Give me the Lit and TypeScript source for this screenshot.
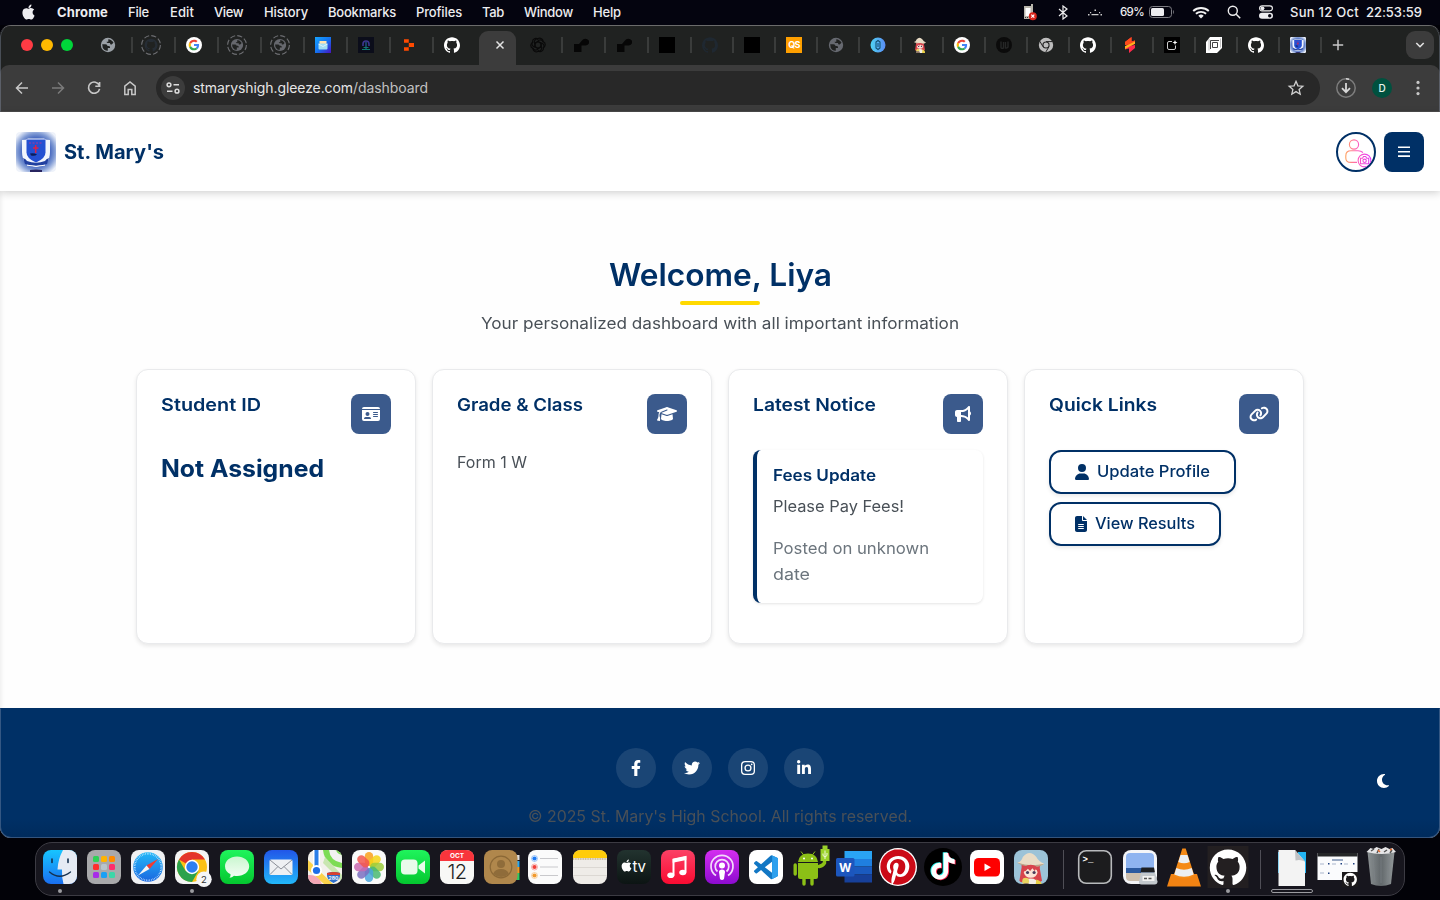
import { LitElement, html, css, svg, type TemplateResult } from "lit";
import { customElement, property } from "lit/decorators.js";

const GITHUB = "M12 .297c-6.63 0-12 5.373-12 12 0 5.303 3.438 9.8 8.205 11.385.6.113.82-.258.82-.577 0-.285-.01-1.04-.015-2.04-3.338.724-4.042-1.61-4.042-1.61C4.422 18.07 3.633 17.7 3.633 17.7c-1.087-.744.084-.729.084-.729 1.205.084 1.838 1.236 1.838 1.236 1.07 1.835 2.809 1.305 3.495.998.108-.776.417-1.305.76-1.605-2.665-.3-5.466-1.332-5.466-5.93 0-1.31.465-2.38 1.235-3.22-.135-.303-.54-1.523.105-3.176 0 0 1.005-.322 3.3 1.23.96-.267 1.98-.399 3-.405 1.02.006 2.04.138 3 .405 2.28-1.552 3.285-1.23 3.285-1.23.645 1.653.24 2.873.12 3.176.765.84 1.23 1.91 1.23 3.22 0 4.61-2.805 5.625-5.475 5.92.42.36.81 1.096.81 2.22 0 1.606-.015 2.896-.015 3.286 0 .315.21.69.825.57C20.565 22.092 24 17.592 24 12.297c0-6.627-5.373-12-12-12";
const APPLE = "M12.152 6.896c-.948 0-2.415-1.078-3.96-1.04-2.04.027-3.91 1.183-4.961 3.014-2.117 3.675-.546 9.103 1.519 12.09 1.013 1.454 2.208 3.09 3.792 3.039 1.52-.065 2.09-.987 3.935-.987 1.831 0 2.35.987 3.96.948 1.637-.026 2.676-1.48 3.676-2.948 1.156-1.688 1.636-3.325 1.662-3.415-.039-.013-3.182-1.221-3.22-4.857-.026-3.04 2.48-4.494 2.597-4.559-1.429-2.09-3.623-2.324-4.39-2.376-2-.156-3.675 1.09-4.61 1.09zM15.53 3.83c.843-1.012 1.4-2.427 1.245-3.83-1.207.052-2.662.805-3.532 1.818-.78.896-1.454 2.338-1.273 3.714 1.338.104 2.715-.688 3.559-1.701";
const FACEBOOK = "M279.14 288l14.22-92.66h-88.91v-60.13c0-25.35 12.42-50.06 52.24-50.06h40.42V6.26S260.43 0 225.36 0c-73.22 0-121.08 44.38-121.08 124.72v70.62H22.89V288h81.39v224h100.17V288z";
const TWITTER = "M459.37 151.716c.325 4.548.325 9.097.325 13.645 0 138.72-105.583 298.558-298.558 298.558-59.452 0-114.68-17.219-161.137-47.106 8.447.974 16.568 1.299 25.34 1.299 49.055 0 94.213-16.568 130.274-44.832-46.132-.975-84.792-31.188-98.112-72.772 6.498.974 12.995 1.624 19.818 1.624 9.421 0 18.843-1.3 27.614-3.573-48.081-9.747-84.143-51.98-84.143-102.985v-1.299c13.969 7.797 30.214 12.67 47.431 13.319-28.264-18.843-46.781-51.005-46.781-87.391 0-19.492 5.197-37.36 14.294-52.954 51.655 63.675 129.3 105.258 216.365 109.807-1.624-7.797-2.599-15.918-2.599-24.04 0-57.828 46.782-104.934 104.934-104.934 30.213 0 57.502 12.67 76.67 33.137 23.715-4.548 46.456-13.32 66.599-25.34-7.798 24.366-24.366 44.833-46.132 57.827 21.117-2.273 41.584-8.122 60.426-16.243-14.292 20.791-32.161 39.308-52.628 54.253z";
const LINKEDIN = "M100.28 448H7.4V148.9h92.88zM53.79 108.1C24.09 108.1 0 83.5 0 53.8a53.79 53.79 0 0 1 107.58 0c0 29.7-24.1 54.3-53.79 54.3zM447.9 448h-92.68V302.4c0-34.7-.7-79.2-48.29-79.2-48.29 0-55.69 37.7-55.69 76.7V448h-92.78V148.9h89.08v40.8h1.3c12.4-23.5 42.69-48.3 87.88-48.3 94 0 111.28 61.9 111.28 142.3V448z";
const USER = "M224 256A128 128 0 1 0 224 0a128 128 0 1 0 0 256zm-45.7 48C79.8 304 0 383.8 0 482.3C0 498.7 13.3 512 29.7 512H418.3c16.4 0 29.7-13.3 29.7-29.7C448 383.8 368.2 304 269.7 304H178.3z";
const FILE = "M64 0C28.7 0 0 28.7 0 64V448c0 35.3 28.7 64 64 64H320c35.3 0 64-28.7 64-64V160H256c-17.7 0-32-14.3-32-32V0H64zM256 0V128H384L256 0zM112 256H272c8.8 0 16 7.2 16 16s-7.2 16-16 16H112c-8.8 0-16-7.2-16-16s7.2-16 16-16zm0 64H272c8.8 0 16 7.2 16 16s-7.2 16-16 16H112c-8.8 0-16-7.2-16-16s7.2-16 16-16zm0 64H272c8.8 0 16 7.2 16 16s-7.2 16-16 16H112c-8.8 0-16-7.2-16-16s7.2-16 16-16z";
const BULLHORN = "M480 32c0-12.9-7.8-24.6-19.8-29.6s-25.7-2.2-34.9 6.9L381.7 53c-48 48-113.1 75-181 75H192 160 64c-35.3 0-64 28.7-64 64v96c0 35.3 28.7 64 64 64l0 128c0 17.7 14.3 32 32 32h64c17.7 0 32-14.3 32-32V352l8.7 0c67.9 0 133 27 181 75l43.6 43.6c9.2 9.2 22.9 11.9 34.9 6.9s19.8-16.6 19.8-29.6V300.4c18.6-8.8 32-32.5 32-60.4s-13.4-51.6-32-60.4V32zm-64 76.7V240 371.3C357.2 317.8 280.5 288 200.7 288H192V192h8.7c79.8 0 156.5-29.8 215.3-83.3z";
const GRADCAP = "M320 32c-8.1 0-16.1 1.4-23.7 4.1L15.8 137.4C6.3 140.9 0 149.9 0 160s6.3 19.1 15.8 22.6l57.9 20.9C57.3 229.3 48 259.8 48 291.9v28.1c0 28.4-10.8 57.7-22.3 80.8c-6.5 13-13.9 25.8-22.5 37.6C0 442.7-.9 448.3 .9 453.4s6 8.9 11.2 10.2l64 16c4.2 1.1 8.7 .3 12.4-2s6.3-6.1 7.1-10.4c8.6-42.8 4.3-81.2-2.1-108.7C90.3 344.3 86 329.8 80 316.5V291.9c0-30.2 10.2-58.7 27.9-81.5c12.9-15.5 29.6-28 49.2-35.7l157-61.7c8.2-3.2 17.5 .8 20.7 9s-.8 17.5-9 20.7l-157 61.7c-12.4 4.9-23.3 12.4-32.2 21.6l159.6 57.6c7.6 2.7 15.6 4.1 23.7 4.1s16.1-1.4 23.7-4.1L624.2 182.6c9.5-3.4 15.8-12.5 15.8-22.6s-6.3-19.1-15.8-22.6L343.7 36.1C336.1 33.4 328.1 32 320 32zM128 408c0 35.3 86 72 192 72s192-36.7 192-72L496.7 262.6 354.5 314c-11.1 4-22.8 6-34.5 6s-23.5-2-34.5-6L143.3 262.6 128 408z";
const LINK = "M579.8 267.7c56.5-56.5 56.5-148 0-204.5c-50-50-128.8-56.5-186.3-15.4l-1.6 1.1c-14.4 10.3-17.7 30.3-7.4 44.6s30.3 17.7 44.6 7.4l1.6-1.1c32.1-22.9 76-19.3 103.8 8.6c31.5 31.5 31.5 82.5 0 114L422.3 334.8c-31.5 31.5-82.5 31.5-114 0c-27.9-27.9-31.5-71.8-8.6-103.8l1.1-1.6c10.3-14.4 6.9-34.4-7.4-44.6s-34.4-6.9-44.6 7.4l-1.1 1.6C206.5 251.2 213 330 263 380c56.5 56.5 148 56.5 204.5 0L579.8 267.7zM60.2 244.3c-56.5 56.5-56.5 148 0 204.5c50 50 128.8 56.5 186.3 15.4l1.6-1.1c14.4-10.3 17.7-30.3 7.4-44.6s-30.3-17.7-44.6-7.4l-1.6 1.1c-32.1 22.9-76 19.3-103.8-8.6C74 372 74 321 105.5 289.5L217.7 177.2c31.5-31.5 82.5-31.5 114 0c27.9 27.9 31.5 71.8 8.6 103.9l-1.1 1.6c-10.3 14.4-6.9 34.4 7.4 44.6s34.4 6.9 44.6-7.4l1.1-1.6C433.5 260.8 427 182 377 132c-56.5-56.5-148-56.5-204.5 0L60.2 244.3z";
const MOON = "M223.5 32C100 32 0 132.3 0 256S100 480 223.5 480c60.6 0 115.5-24.2 155.8-63.4c5-4.9 6.3-12.5 3.1-18.7s-10.1-9.7-17-8.5c-9.8 1.7-19.8 2.6-30.1 2.6c-96.9 0-175.5-78.8-175.5-176c0-65.8 36-123.1 89.3-153.3c6.1-3.5 9.2-10.5 7.7-17.3s-7.3-11.9-14.3-12.5c-6.3-.5-12.6-.8-19-.8z";
const PINTEREST = "M12.017 0C5.396 0 .029 5.367.029 11.987c0 5.079 3.158 9.417 7.618 11.162-.105-.949-.199-2.403.041-3.439.219-.937 1.406-5.957 1.406-5.957s-.359-.72-.359-1.781c0-1.663.967-2.911 2.168-2.911 1.024 0 1.518.769 1.518 1.688 0 1.029-.653 2.567-.992 3.992-.285 1.193.6 2.165 1.775 2.165 2.128 0 3.768-2.245 3.768-5.487 0-2.861-2.063-4.869-5.008-4.869-3.41 0-5.409 2.562-5.409 5.199 0 1.033.394 2.143.889 2.741.099.12.112.225.085.345-.09.375-.293 1.199-.334 1.363-.053.225-.172.271-.401.165-1.495-.69-2.433-2.878-2.433-4.646 0-3.776 2.748-7.252 7.92-7.252 4.158 0 7.392 2.967 7.392 6.923 0 4.135-2.607 7.462-6.233 7.462-1.214 0-2.354-.629-2.758-1.379l-.749 2.848c-.269 1.045-1.004 2.352-1.498 3.146 1.123.345 2.306.535 3.55.535 6.607 0 11.985-5.365 11.985-11.987C23.97 5.39 18.592.026 11.985.026L12.017 0z";
const TIKTOK = "M12.525.02c1.31-.02 2.61-.01 3.91-.02.08 1.53.63 3.09 1.75 4.17 1.12 1.11 2.7 1.62 4.24 1.79v4.03c-1.44-.05-2.89-.35-4.2-.97-.57-.26-1.1-.59-1.62-.93-.01 2.92.01 5.84-.02 8.75-.08 1.4-.54 2.79-1.35 3.94-1.31 1.92-3.58 3.17-5.91 3.21-1.43.08-2.86-.31-4.08-1.03-2.02-1.19-3.44-3.37-3.65-5.71-.02-.5-.03-1-.01-1.49.18-1.9 1.12-3.72 2.58-4.96 1.66-1.44 3.98-2.13 6.15-1.72.02 1.48-.04 2.96-.04 4.44-.99-.32-2.15-.23-3.02.37-.63.41-1.11 1.04-1.36 1.75-.21.51-.15 1.07-.14 1.61.24 1.64 1.82 3.02 3.5 2.87 1.12-.01 2.19-.66 2.77-1.61.19-.33.4-.67.41-1.06.1-1.79.06-3.57.07-5.36.01-4.03-.01-8.05.02-12.07z";
const VSCODE = "M23.15 2.587L18.21.21a1.494 1.494 0 0 0-1.705.29l-9.46 8.63-4.12-3.128a.999.999 0 0 0-1.276.057L.327 7.261A1 1 0 0 0 .326 8.74L3.899 12 .326 15.26a1 1 0 0 0 .001 1.479L1.65 17.94a.999.999 0 0 0 1.276.057l4.12-3.128 9.46 8.63a1.492 1.492 0 0 0 1.704.29l4.942-2.377A1.5 1.5 0 0 0 24 20.06V3.939a1.5 1.5 0 0 0-.85-1.352zm-5.146 14.861L10.826 12l7.178-5.448v10.896z";

const icon = (w: number, h: number, box: string, body: unknown) =>
  html`<svg width=${w} height=${h} viewBox=${box} fill="currentColor">${body}</svg>`;

/** One line of text that spans the given width, either by tracking or by widening its glyphs. */
@customElement("fit-text")
class FitText extends LitElement {
  @property({ type: Number }) w = 0;
  @property({ type: Boolean }) stretch = false;
  @property() text = "";

  static styles = css`
    :host { display: inline-block; white-space: pre; }
    span { display: inline-block; transform-origin: 0 50%; }
  `;

  firstUpdated() {
    const line = this.renderRoot.querySelector("span") as HTMLElement;
    const natural = line.getBoundingClientRect().width;
    if (this.stretch) {
      line.style.transform = `scaleX(${this.w / natural})`;
      this.style.width = `${this.w}px`;
    } else {
      line.style.letterSpacing = `${(this.w - natural) / this.text.length}px`;
    }
  }

  render() {
    return html`<span>${this.text}</span>`;
  }
}

const fit = (text: string, w: number) => html`<fit-text .text=${text} .w=${w}></fit-text>`;
const wide = (text: string, w: number) => html`<fit-text .text=${text} .w=${w} .stretch=${true}></fit-text>`;

@customElement("menu-bar")
class MenuBar extends LitElement {
  static styles = css`
    :host { display: flex; align-items: center; height: 25px; color: #ededf0; background: #04040f;
      font: 500 13px/25px Inter, sans-serif; }
    svg { display: block; flex: none; }
    .apple { margin: -1px 0 0 21px; width: 15px; }
    .app { margin-left: 21px; width: 71px; font-weight: 700; }
    .item { display: block; }
    .status { display: flex; align-items: center; margin-left: auto; padding-right: 18px; margin-top: -1px; }
    .bt { margin-left: 20px; }
    .dots { margin-left: 18px; }
    .pct { margin-left: 17px; font-size: 11.5px; width: 24px; }
    .battery { margin-left: 5px; }
    .wide { margin-left: 17px; }
    .date { margin-left: 16px; width: 68px; }
    .time { margin-left: 8px; width: 56px; }
  `;

  render() {
    const items: [string, number, number][] = [
      ["File", 21, 42], ["Edit", 24, 44], ["View", 29, 50], ["History", 44, 64],
      ["Bookmarks", 68, 88], ["Profiles", 46, 66], ["Tab", 22, 42], ["Window", 49, 69], ["Help", 28, 40],
    ];
    return html`
      <div class="apple">${icon(15, 16, "0 0 24 24", svg`<path d=${APPLE} />`)}</div>
      <div class="app">${fit("Chrome", 51)}</div>
      ${items.map(([t, w, cell]) => html`<div class="item" style="width:${cell}px">${fit(t, w)}</div>`)}
      <div class="status">
        <div>${icon(14, 17, "0 0 14 17", svg`<path d="M1 2h7V0h2v15H1z" fill="#b9b6ac"/><path d="M2.500 4h5v8h-5z" fill="#fff"/><path d="M2 13h1v1H2zM4 13h1v1H4z" fill="#333"/><circle cx="9.800" cy="12.200" r="4" fill="#d9261c"/><path d="M8.300 10.700l3 3m0-3l-3 3" stroke="#fff" stroke-width="1.200"/>`)}</div>
        <div class="bt">${icon(12, 15, "0 0 12 15", svg`<path d="M2 4l8 7-4 3V1l4 3-8 7" fill="none" stroke="#eee" stroke-width="1.200"/>`)}</div>
        <div class="dots">${icon(16, 10, "0 0 16 10", svg`<path d="M1 7h1.500v1.500H1zM3 5h1.200v1.200H3zM4.500 7h7v1.300h-7zM7.500 2.500H9V4H7.500zM12 5h1.200v1.200H12zM13.500 7H15v1.500h-1.500z" fill="#ccc"/>`)}</div>
        <div class="pct">${fit("69%", 24)}</div>
        <div class="battery">${icon(26, 12, "0 0 26 12", svg`<rect x=".5" y=".5" width="22" height="11" rx="3" fill="none" stroke="#7d7d83"/><rect x="2" y="2" width="13" height="8" rx="1.500"/><path d="M24 4v4c1.200-.5 1.200-3.500 0-4z" fill="#7d7d83"/>`)}</div>
        <div class="wide">${icon(18, 13, "0 0 18 13", svg`<path d="M1.200 5a11.500 11.500 0 0 1 15.600 0M3.900 7.800a7.600 7.600 0 0 1 10.200 0" fill="none" stroke="#f2f2f2" stroke-width="1.900"/><path d="M9 12.500L6.300 9.800a4 4 0 0 1 5.400 0z"/>`)}</div>
        <div class="wide">${icon(14, 14, "0 0 14 14", svg`<circle cx="5.800" cy="5.800" r="4.500" fill="none" stroke="#eee" stroke-width="1.400"/><path d="M9.200 9.200l4 4" stroke="#eee" stroke-width="1.500"/>`)}</div>
        <div class="wide">${icon(16, 14, "0 0 16 14", svg`<rect x="1.600" y=".8" width="12.800" height="5" rx="2.500" fill="none" stroke="#eee" stroke-width="1.200"/><circle cx="4.500" cy="3.300" r="1.900"/><rect x="1" y="7.700" width="14" height="6" rx="3"/><circle cx="11.700" cy="10.700" r="1.700" fill="#04040f"/>`)}</div>
        <div class="date">${fit("Sun 12 Oct", 69)}</div>
        <div class="time">${fit("22:53:59", 56)}</div>
      </div>`;
  }
}

const crest = svg`
  <defs><radialGradient id="halo" r=".62"><stop offset=".5" stop-color="#3558b8"/><stop offset=".75" stop-color="#7f9ad4"/><stop offset="1" stop-color="#eef2fa"/></radialGradient></defs>
  <rect width="40" height="40" rx="3" fill="url(#halo)"/>
  <path d="M6 8q4 0 6-1.500h16q2 1.500 6 1.500v12q0 7-4 12l-10 3-10-3q-4-5-4-12z" fill="#f2f5fc"/>
  <path d="M10.500 7.500h19v13q0 6-9.500 10-9.500-4-9.500-10z" fill="#2450d2"/>
  <path d="M13 11h14" stroke="#7a3fb0" stroke-width="1.500" stroke-dasharray="2 1.500"/>
  <path d="M19.700 13v8M17 16h5.500" stroke="#d9224a" stroke-width="1.500"/>
  <path d="M14 21.500q4-1 7 1-2 2-6 1z" fill="#0b1d5a"/>
  <path d="M7 26q3 1 4 3 9 3.500 18 0 1-2 4-3l-2 6q-11 4-22 0z" fill="#2140a0"/><path d="M11 33.200q9 2.200 18 0" stroke="#fff" fill="none"/>
  <path d="M14 38q6-1 12 0v2H14z" fill="#27245f"/>`;

const google = svg`<circle cx="24" cy="24" r="24" fill="#fff"/><g transform="translate(8 8) scale(.667)">
  <path fill="#EA4335" d="M24 9.500c3.540 0 6.710 1.220 9.210 3.600l6.850-6.850C35.900 2.380 30.470 0 24 0 14.620 0 6.510 5.380 2.560 13.220l7.980 6.190C12.430 13.720 17.740 9.500 24 9.500z"/>
  <path fill="#4285F4" d="M46.980 24.550c0-1.570-.15-3.090-.38-4.550H24v9.020h12.940c-.58 2.960-2.260 5.480-4.780 7.180l7.730 6c4.510-4.180 7.090-10.360 7.090-17.650z"/>
  <path fill="#FBBC05" d="M10.530 28.590c-.48-1.450-.76-2.990-.76-4.590s.27-3.140.76-4.590l-7.980-6.190C.92 16.460 0 20.120 0 24c0 3.880.92 7.540 2.560 10.780l7.970-6.190z"/>
  <path fill="#34A853" d="M24 48c6.480 0 11.930-2.130 15.890-5.810l-7.730-6c-2.150 1.450-4.920 2.300-8.160 2.300-6.260 0-11.570-4.220-13.470-9.910l-7.980 6.190C6.510 42.620 14.620 48 24 48z"/></g>`;

const girl = svg`
  <path d="M9 16Q8 9 17 9t8 8l2 11q-4 3-6 0H12q-3 3-5 0z" fill="#d8434c"/>
  <path d="M5 12q4-1 5-5 6-7 12 0 2 4 7 6-3 3-12 2T5 12z" fill="#e9dcc6"/>
  <path d="M5 12q11 4 24 1-3 3-12 2.500T5 12z" fill="#b9a58a"/>
  <ellipse cx="17" cy="20.500" rx="6" ry="5" fill="#fbe3d6"/>
  <path d="M10.500 20q0-6 6.500-6t6.500 6l-2-2-1 1.500-2-2.500-2 2.500-2-2-2 2z" fill="#d8434c"/>
  <circle cx="14.200" cy="20.800" r="1.400" fill="#4a3a5c"/><circle cx="20" cy="20.800" r="1.400" fill="#4a3a5c"/>
  <path d="M10 34q0-8 7-8t8 8z" fill="#f3eee6"/><path d="M22 27q6 2 5 7h-6z" fill="#e8cf45"/>
  <circle cx="12.500" cy="28.500" r="3" fill="#e9d460"/><path d="M9 34q0-4 4-4t4 4z" fill="#8d7565"/>`;

/* Globe: solid disc with land masses cut out along the diagonal. */
const globe = (c: string) => svg`<circle cx="8" cy="8" r="7.200" fill=${c}/>
  <path d="M2.200 7.300H5.500q2 0 2 1.700H8.800q1.200 0 1.200 1.300v.6H7.800v2.800q-1.600.2-3.200-.8Q2 11 2.200 7.300zM8.300 2.200q3.200.1 5.200 3.400l-1.700 1.900-1.700-.2V6H7.900q-1.300 0-1.300-1.300h1.700z" fill="#202221"/>`;
const dashed = (c: string) => svg`<circle cx="10" cy="10" r="9.400" fill="none" stroke=${c} stroke-width="1.100" stroke-dasharray="5.200 2.180"/>`;
const globeTab = (c: string) => icon(16, 16, "0 0 16 16", globe(c));
const github = (c: string) => icon(16, 16, "0 0 24 24", svg`<path d=${GITHUB} fill=${c}/>`);
const googleTab = icon(16, 16, "0 0 48 48", google);
const loadingGlobe = icon(20, 20, "0 0 20 20", svg`${dashed("#6d6e72")}<g transform="translate(3.200 3.200) scale(.85)">${globe("#66686e")}</g>`);
const arm = icon(16, 16, "0 0 16 16", svg`<path d="M1 7h5l3-3.500a3.800 3.400 0 1 1 3.500 5h-4V15H1z" fill="#060606"/>`);
const black = icon(16, 16, "0 0 16 16", svg`<rect width="16" height="16" fill="#000"/>`);

const leftTabs: TemplateResult[] = [
  globeTab("#9aa0a6"),
  icon(20, 20, "0 0 20 20", svg`${dashed("#6d6e72")}<g transform="translate(3.600 3.600) scale(.54)"><path d=${GITHUB} fill="#262d35"/></g>`),
  googleTab,
  loadingGlobe,
  loadingGlobe,
  icon(16, 16, "0 0 16 16", svg`<defs><linearGradient id="mail" x2="1" y2="1"><stop stop-color="#16a5ff"/><stop offset=".5" stop-color="#1474f0"/><stop offset="1" stop-color="#4812c0"/></linearGradient></defs><rect width="16" height="16" fill="url(#mail)"/><rect x="4.500" y="4" width="7" height="4" fill="#ffe3b0"/><rect x="3.500" y="6.500" width="9" height="6" rx="1" fill="#9fdcf2"/><path d="M3.500 7L8 9.500 12.500 7" fill="none" stroke="#e9f8ff" stroke-width=".8"/>`),
  icon(16, 16, "0 0 16 16", svg`<rect width="16" height="16" fill="#0b0d1a"/><path d="M5 9V7a3 3 0 0 1 6 0v2" fill="none" stroke="#3b3690" stroke-width="1.600"/><path d="M8 5v7" stroke="#23609a" stroke-width="1.200"/><path d="M4 12.500h8M5.500 10.500h5" stroke="#0e7a70" stroke-width="1.200"/>`),
  icon(16, 16, "0 0 16 16", svg`<path d="M3 2.200h4.800v3.600H3zM7.800 6h5.200v4H7.800zM3 10.200h4.800v3.600H3z" fill="#ff4a00"/>`),
  github("#fff"),
];

const rightTabs: TemplateResult[] = [
  icon(16, 16, "0 0 16 16", svg`<g fill="none" stroke="#0a0a0a" stroke-width="1.200">${[0, 60, 120, 180, 240, 300].map((a) => svg`<path d="M8 4.500L5 6.200V10a3.200 3.200 0 0 1-2.500-5A3.200 3.200 0 0 1 8 2.500" transform="rotate(${a} 8 8)"/>`)}</g>`),
  arm, arm, black, github("#1f2831"), black,
  html`<div class="qs">QS</div>`,
  globeTab("#666970"),
  icon(16, 16, "0 0 16 16", svg`<defs><linearGradient id="coin" x2="1"><stop stop-color="#4fd3f2"/><stop offset="1" stop-color="#5a8cf5"/></linearGradient></defs><circle cx="8" cy="8" r="7.500" fill="url(#coin)"/><path d="M8 3.500l2 1.500v6L8 12.500 6 11V5z" fill="none" stroke="#12506e" stroke-width="1.100"/><path d="M8 6v4" stroke="#12506e"/>`),
  icon(16, 16, "3 2 28 32", girl),
  googleTab,
  icon(16, 16, "0 0 16 16", svg`<circle cx="8" cy="8" r="8" fill="#0b0b0b"/><path d="M5 4.500v6q.5 1.500 2.500.5V5M9.500 5v6q1.200.5 2.500-1V4.500" fill="none" stroke="#262727" stroke-width="1.400"/>`),
  icon(16, 16, "0 0 16 16", svg`<circle cx="8" cy="8" r="7.200" fill="#bdbdbd"/><circle cx="8" cy="8" r="3.600" fill="#222"/><circle cx="8" cy="8" r="2.500" fill="#bdbdbd"/><path d="M8 4.600h6.500M5 9.700L1.800 4.200M11 9.700L7.800 15" stroke="#222" stroke-width="1"/>`),
  github("#fff"),
  icon(16, 16, "0 0 16 16", svg`<path d="M9.500 0v4.500L13 3.500v3.200L9 8.800 13 8v3l-6 5v-4.500L3 12.500V9.300L6.500 7.500 3 8V5z" fill="#ff2a4c"/><path d="M9.500 0v4.500L13 3.500v2L6.500 7.500 3 8V5z" fill="#ff4c1a"/><path d="M3 9.300L13 4.500v2.200L9 8.800 3 12z" fill="#ffb31a"/>`),
  icon(16, 16, "0 0 16 16", svg`<rect width="16" height="16" fill="#000"/><path d="M8 4.500H5Q3.500 4.500 3.500 6v5Q3.500 12.500 5 12.500h5q1.500 0 1.500-1.500V8.500" fill="none" stroke="#ccc"/><path d="M11 3l.7 1.800 1.800.7-1.800.7L11 8l-.7-1.800-1.800-.7 1.800-.7z" fill="#fff"/>`),
  icon(16, 16, "0 0 16 16", svg`<path d="M0 5l4-5h12v11l-5 5H0z" fill="#fff"/><path d="M4.500 12V3.500H13M6.500 10.500V5.500H11.500v5z" fill="none" stroke="#444"/><path d="M3 13.500V2M14.500 1.500v9" fill="none" stroke="#999" stroke-width=".6"/>`),
  github("#fff"),
  icon(16, 16, "0 0 40 40", crest),
];

@customElement("browser-chrome")
class BrowserChrome extends LitElement {
  static styles = css`
    :host { display: block; background: #202221; color: #c7c7c7; font-family: Inter, sans-serif; }
    svg { display: block; flex: none; }
    .strip { display: flex; height: 39px; align-items: center; }
    .lights { display: flex; gap: 8px; padding-left: 21px; width: 90px; box-sizing: border-box; flex: none; }
    .light { width: 12px; height: 12px; border-radius: 50%; flex: none; }
    .red { background: #ff3b44; } .yellow { background: #ffb900; } .green { background: #00d63a; }
    .lights, .cell, .plus { margin-bottom: 1px; }
    .cell { display: flex; align-items: center; width: 43px; height: 16px; box-sizing: border-box;
      border-right: 2px solid #3a3c3b; flex: none; }
    .cell.narrow { width: 42px; }
    .cell.last { border-color: transparent; }
    .fav { display: flex; justify-content: center; align-items: center; width: 36px; height: 16px; margin-right: -2px; flex: none; }
    .active { align-self: stretch; width: 37px; margin: 5px 4px 0 2px; border-radius: 9px 9px 0 0; background: #3c3c3c;
      display: flex; align-items: center; justify-content: center; padding: 0 0 6px 5px; box-sizing: border-box; flex: none; }
    .qs { width: 16px; height: 16px; background: #ff9f00; color: #fff; font: 700 9px/15px Inter, sans-serif; text-align: center; letter-spacing: -.8px; }
    .plus { margin-left: 10px; }
    .drop { display: grid; place-items: center; width: 28px; height: 28px; border-radius: 9px; background: #3c3c3c; margin: 0 6px 1px auto; }
    .bar { display: flex; align-items: center; height: 47px; background: #3c3c3c; border-radius: 9px 9px 0 0; box-sizing: border-box; padding: 0 13px; border-bottom: 1px solid #4b4b4b; }
    .nav { display: flex; gap: 18px; width: 143px; flex: none; color: #c7c7c7; }
    .omni { display: flex; align-items: center; width: 1164px; height: 34px; border-radius: 17px; background: #282828; box-sizing: border-box;
      padding: 0 15px 0 5px; flex: none; margin-top: -1px; }
    .info { display: grid; place-items: center; width: 24px; height: 24px; border-radius: 50%; background: #3c3c3c; margin-right: 8px; }
    .url { flex: 1; font-size: 14px; line-height: 20px; color: #e6e6e6; }
    .path { color: #c2c2c2; }
    .avatar { width: 20px; height: 20px; border-radius: 50%; background: #00513f; color: #e8f5f0; font: 500 10px/20px Inter, sans-serif; text-align: center; margin: 0 24px 0 16px; flex: none; }
    .dl { margin-left: 16px; }
  `;

  render() {
    return html`
      <div class="strip">
        <div class="lights"><i class="light red"></i><i class="light yellow"></i><i class="light green"></i></div>
        ${leftTabs.map((t, i) => html`<div class="cell ${i === 8 ? "last" : ""}"><div class="fav">${t}</div></div>`)}
        <div class="active">${icon(10, 10, "0 0 10 10", svg`<path d="M1.500 1.500l7 7m0-7l-7 7" stroke="#e3e3e3" stroke-width="1.500"/>`)}</div>
        ${rightTabs.map((t, i) => html`<div class="cell ${i > 3 ? "narrow" : ""}"><div class="fav">${t}</div></div>`)}
        <div class="plus">${icon(12, 12, "0 0 12 12", svg`<path d="M6 .8v10.400M.8 6h10.400" stroke="#c7c7c7" stroke-width="1.500"/>`)}</div>
        <div class="drop">${icon(10, 8, "0 0 10 8", svg`<path d="M1.300 2L5 5.700 8.700 2" fill="none" stroke="#e0e0e0" stroke-width="1.600"/>`)}</div>
      </div>
      <div class="bar">
        <div class="nav">
          ${icon(18, 18, "0 0 18 18", svg`<path d="M15 9H4M9 3.500L3.500 9 9 14.500" fill="none" stroke="#c7c7c7" stroke-width="1.500"/>`)}
          ${icon(18, 18, "0 0 18 18", svg`<path d="M3 9h11M9 3.500L14.500 9 9 14.500" fill="none" stroke="#7b7b7b" stroke-width="1.500"/>`)}
          ${icon(18, 18, "0 0 18 18", svg`<path d="M14.300 6.500A5.600 5.600 0 1 0 14.600 9.800M14.600 3v4.300h-4.300" fill="none" stroke="#c7c7c7" stroke-width="1.600"/>`)}
          ${icon(18, 18, "0 0 18 18", svg`<path d="M3.800 7.200L9 3l5.200 4.200v8.300h-3.400v-5H7.200v5H3.800z" fill="none" stroke="#c7c7c7" stroke-width="1.500"/>`)}
        </div>
        <div class="omni">
          <div class="info">${icon(14, 12, "0 0 14 12", svg`<g fill="none" stroke="#dcdcdc" stroke-width="1.500"><circle cx="3" cy="2.800" r="1.900"/><path d="M7.500 2.800H13M1 9.200h5.500"/><circle cx="11" cy="9.200" r="1.900"/></g>`)}</div>
          <div class="url">${fit("stmaryshigh.gleeze.com", 160)}<span class="path">${fit("/dashboard", 75)}</span></div>
          ${icon(18, 18, "0 0 18 18", svg`<path d="M9 2.300l1.900 4.500 4.900.4-3.700 3.200 1.100 4.800L9 12.600l-4.200 2.600 1.100-4.800L2.200 7.200l4.900-.4z" fill="none" stroke="#d0d0d0" stroke-width="1.300"/>`)}
        </div>
        <div class="dl">${icon(20, 20, "0 0 20 20", svg`<circle cx="10" cy="10" r="9.200" fill="none" stroke="#7d7d7d" stroke-width="1.500"/><path d="M10 .8a9.200 9.200 0 0 1 3 .5" stroke="#d8d8d8" stroke-width="1.500" fill="none"/><path d="M10 5v9M6 10.200l4 4 4-4" fill="none" stroke="#d8d8d8" stroke-width="1.800"/>`)}</div>
        <div class="avatar">D</div>
        ${icon(4, 16, "0 0 4 16", svg`<circle cx="2" cy="2.400" r="1.600"/><circle cx="2" cy="8" r="1.600"/><circle cx="2" cy="13.600" r="1.600"/>`)}
      </div>`;
  }
}

@customElement("school-page")
class SchoolPage extends LitElement {
  static styles = css`
    :host { display: flex; flex-direction: column; flex: 1; background: #fefefe; color: #495057; font: 400 16px/26px Inter, sans-serif; }
    svg { display: block; flex: none; }
    header { display: flex; align-items: center; height: 79px; flex: none; padding: 1px 16px 0; box-sizing: border-box; background: #fff; position: relative;
      box-shadow: 0 2px 8px rgba(0, 0, 0, .18); color: #003066; }
    .crest { border-radius: 4px; overflow: hidden; }
    .brand { margin-left: 8px; font: 700 20px/40px Inter, sans-serif; }
    .me { margin-left: auto; width: 36px; height: 36px; border: 2px solid #003066; border-radius: 50%; overflow: hidden; }
    .menu { display: grid; place-items: center; width: 40px; height: 40px; margin-left: 8px; border-radius: 8px; background: #003066; color: #fff; }
    .menu svg { margin-bottom: 1px; }
    main { display: flex; flex-direction: column; align-items: center; padding: 64px 0; height: 389px; box-shadow: inset 4px 0 4px -3px rgba(0, 0, 0, .08); }
    h1 { margin: 0; font: 600 31px/40px Inter, sans-serif; color: #003066; }
    .rule { width: 80px; height: 4px; margin-top: 6px; border-radius: 2px; background: #ffd900; }
    .sub { margin: 5px 0 33px; }
    .cards { display: grid; grid-template-columns: repeat(4, 280px); gap: 16px; height: 275px; }
    .card { box-sizing: border-box; padding: 24px; border: 1px solid #e9eaec; border-radius: 12px; background: #fff; box-shadow: 0 2px 4px rgba(0, 0, 0, .09); }
    .head { display: flex; justify-content: space-between; height: 40px; margin-bottom: 16px; }
    h2 { margin: 0; font: 600 17.500px/22px Inter, sans-serif; color: #003066; }
    .badge { display: grid; place-items: center; width: 40px; height: 40px; border-radius: 8px; background: #3b5a8c; color: #fff; }
    .big { font-weight: 700; font-size: 24px; line-height: 38px; color: #003066; }
    .form { margin-top: -1px; }
    .notice { height: 153px; box-sizing: border-box; padding: 16px; border-left: 4px solid #003066; border-radius: 8px; background: #fff; box-shadow: 0 1px 3px rgba(0, 0, 0, .11); }
    h3 { margin: 0 0 8px; font: 600 16px/19px Inter, sans-serif; color: #003066; }
    .posted { margin-top: 16px; color: #6c757d; }
    .btn { display: flex; align-items: center; height: 44px; box-sizing: border-box; border: 2px solid #003066; border-radius: 12px; padding: 0 0 2px 24px;
      gap: 8px; margin-bottom: 8px; color: #003066; font-weight: 500; box-shadow: 0 2px 4px rgba(0, 0, 0, .09); }
    .btn svg { margin-top: 2px; }
    .profile { width: 187px; } .results { width: 172px; }
    footer { display: flex; flex-direction: column; align-items: center; flex: 1; padding-top: 40px; position: relative; background: linear-gradient(#003066 85%, #002b5c); }
    .social { display: flex; gap: 16px; margin-bottom: 15px; }
    .round { display: grid; place-items: center; width: 40px; height: 40px; border-radius: 50%; background: rgba(255, 255, 255, .1); color: #fff; }
    .theme { position: absolute; right: 51px; top: 65px; color: #fff; }
  `;

  private card(title: string, w: number, glyph: TemplateResult, body: TemplateResult) {
    return html`<section class="card"><div class="head"><h2>${wide(title, w)}</h2><div class="badge">${glyph}</div></div>${body}</section>`;
  }

  render() {
    const idCard = icon(18, 16, "0 0 576 512", svg`<path fill-rule="evenodd" d="M0 96q0-64 64-64h448q64 0 64 64zM0 128h576v288q0 64-64 64H64q-64 0-64-64zM64 405.300q0 10.700 10.700 10.700h202.600q10.700 0 10.700-10.700 0-53.300-53.300-53.300H117.300q-53.300 0-53.300 53.300zM176 192a64 64 0 1 0 0 128 64 64 0 0 0 0-128zM368 192h128q16 0 16 16t-16 16H368q-16 0-16-16t16-16zM368 256h128q16 0 16 16t-16 16H368q-16 0-16-16t16-16zM368 320h128q16 0 16 16t-16 16H368q-16 0-16-16t16-16z"/>`);
    return html`
      <header>
        <div class="crest">${icon(40, 40, "0 0 40 40", crest)}</div>
        <div class="brand">${wide("St. Mary's", 100)}</div>
        <div class="me">${icon(36, 36, "0 0 36 36", svg`
          <defs><linearGradient id="pink" gradientUnits="userSpaceOnUse" x1="8" y1="0" x2="32" y2="0"><stop stop-color="#ffa060"/><stop offset=".5" stop-color="#ff5cc0"/><stop offset="1" stop-color="#e33cf5"/></linearGradient></defs>
          <g fill="none" stroke="url(#pink)" stroke-width="1.100"><circle cx="16" cy="10.500" r="4.600"/><path d="M25 18.500q-2-1.800-5-1.800h-7q-5.200 0-5.200 5.200v2q0 4.500 5.200 4.500h6"/><circle cx="26.500" cy="26.500" r="6.400"/><path d="M22.500 24.200h2l1-1.700h2.200l1 1.700h2v5.500h-8.200z"/><circle cx="26.600" cy="26.800" r="1.700"/></g>`)}</div>
        <div class="menu">${icon(12, 12, "0 0 12 12", svg`<path d="M0 1.300h12M0 5.700h12M0 10.100h12" stroke="#fff" stroke-width="1.600"/>`)}</div>
      </header>
      <main>
        <h1>${wide("Welcome, Liya", 223)}</h1>
        <div class="rule"></div>
        <div class="sub">${wide("Your personalized dashboard with all important information", 478)}</div>
        <div class="cards">
          ${this.card("Student ID", 100, idCard, html`<div class="big">${wide("Not Assigned", 163)}</div>`)}
          ${this.card("Grade & Class", 126, icon(20, 16, "0 0 640 512", svg`<path d=${GRADCAP}/>`), html`<div class="form">${wide("Form 1 W", 70)}</div>`)}
          ${this.card("Latest Notice", 123, icon(16, 16, "0 0 512 512", svg`<path d=${BULLHORN}/>`), html`
            <div class="notice"><h3>${wide("Fees Update", 103)}</h3><div>${wide("Please Pay Fees!", 131)}</div>
            <div class="posted">${wide("Posted on unknown", 156)}<br>${wide("date", 37)}</div></div>`)}
          ${this.card("Quick Links", 108, icon(20, 16, "0 0 640 512", svg`<path d=${LINK}/>`), html`
            <div class="btn profile">${icon(14, 16, "0 0 448 512", svg`<path d=${USER}/>`)}${wide("Update Profile", 113)}</div>
            <div class="btn results">${icon(12, 16, "0 0 384 512", svg`<path d=${FILE}/>`)}${wide("View Results", 100)}</div>`)}
        </div>
      </main>
      <footer>
        <div class="social">
          <div class="round">${icon(10, 16, "0 0 320 512", svg`<path d=${FACEBOOK}/>`)}</div>
          <div class="round">${icon(16, 16, "0 0 512 512", svg`<path d=${TWITTER}/>`)}</div>
          <div class="round">${icon(14, 14, "0 0 14 14", svg`<rect x=".65" y=".65" width="12.700" height="12.700" rx="3.400" fill="none" stroke="#fff" stroke-width="1.300"/><circle cx="7" cy="7" r="2.950" fill="none" stroke="#fff" stroke-width="1.300"/><circle cx="10.700" cy="3.300" r=".85"/>`)}</div>
          <div class="round">${icon(14, 16, "0 0 448 512", svg`<path d=${LINKEDIN}/>`)}</div>
        </div>
        <div>${wide("© 2025 St. Mary's High School. All rights reserved.", 384)}</div>
        <div class="theme">${icon(12, 16, "0 0 384 512", svg`<path d=${MOON}/>`)}</div>
      </footer>`;
  }
}

/* Dock artwork is drawn in a 44 x 44 box; rounded app tiles fill 5..39. */
const tile = (fill: string) => svg`<rect x="5" y="5" width="34" height="34" rx="8" fill=${fill}/>`;
const grad = (id: string, a: string, b: string) => svg`<linearGradient id=${id} x2="0" y2="1"><stop stop-color=${a}/><stop offset="1" stop-color=${b}/></linearGradient>`;
const petals = ["#f9a01b", "#f4d415", "#9acb3b", "#48b871", "#4aa5dc", "#7a6fc0", "#c968b0", "#f2564d"];
const pad = ["#2fd158", "#ffb400", "#ff8a00", "#ff2d2d", "#b8c4cc", "#ff2d6c", "#a82de8", "#1aa0f5", "#3dd6a8"];

const dockApps: unknown[] = [
  svg`<defs><clipPath id="tc"><rect x="5" y="5" width="34" height="34" rx="8"/></clipPath>${grad("fi", "#17c5ff", "#1a6ff0")}</defs>${tile("url(#fi)")}
    <path clip-path="url(#tc)" d="M25 5q-5 9-5.500 19.500h4.500q-.5 7 1.500 14.500H39V5z" fill="#e6ebf4"/><path d="M14 14v3.500M30 14v3.500" stroke="#15304f" stroke-width="1.600" stroke-linecap="round"/><path d="M11.500 27q10 8.500 21 0" fill="none" stroke="#15304f" stroke-width="1.300" stroke-linecap="round"/>`,
  svg`${tile("#a9a9ab")}${pad.map((c, i) => svg`<rect x=${11 + (i % 3) * 8} y=${11 + Math.floor(i / 3) * 8} width="6" height="6" rx="1.500" fill=${c}/>`)}`,
  svg`<defs>${grad("sf", "#23b8f8", "#1a66e0")}</defs>${tile("#f0f1f3")}<circle cx="22" cy="22" r="14.800" fill="url(#sf)"/><circle cx="22" cy="22" r="13.300" fill="none" stroke="#cdeaff" stroke-width="1.800" stroke-dasharray=".6 1.100"/><path d="M32 14L20.500 20.500l3 3.500z" fill="#f23b30"/><path d="M12 30.500l8.500-10 3 3.500z" fill="#f5f5f5"/>`,
  svg`${tile("#f4f4f4")}<circle cx="22" cy="22" r="15" fill="#fbc116"/><path d="M22 22L9 14.500A15 15 0 0 1 35 14.500H22z" fill="#e4352b"/><path d="M9 14.500A15 15 0 0 0 22 37l6.500-11.300H22L15.500 25.700z" fill="#2ba24c"/><circle cx="22" cy="22" r="7.200" fill="#fff"/><circle cx="22" cy="22" r="5.700" fill="#2d7ef0"/>
    <circle cx="34" cy="34.300" r="7.700" fill="#f5f5f7"/><text x="34" y="37.800" font-size="9.500" text-anchor="middle" fill="#333" font-family="Inter, sans-serif">2</text>`,
  svg`<defs>${grad("ms", "#1ff45c", "#04c72f")}${grad("bb", "#c9f7cf", "#f6fdf6")}</defs>${tile("url(#ms)")}<path d="M22 11.500c7 0 12.200 4.300 12.200 9.700S29 31 22 31q-1.500 0-3-.3-2 2-4.500 2.100 1.300-1.400 1-3.500Q10 26.300 10 21.200c0-5.400 5-9.700 12-9.700z" fill="url(#bb)"/>`,
  svg`<defs>${grad("ml", "#2156e8", "#22b8fa")}</defs>${tile("url(#ml)")}<rect x="10.500" y="14.500" width="23" height="15.500" rx="1.500" fill="#eef0f3"/><path d="M11 15l11 9 11-9M11 29.500l8-8M33 29.500l-8-8" fill="none" stroke="#8b8f98" stroke-width="1"/>`,
  svg`${tile("#f3f1ec")}<g clip-path="url(#tc)"><path d="M20 5h19v18q-17-2-19-18z" fill="#7ddc54"/><path d="M26 5q1 11 13 13v-8q-5-1-6-5z" fill="#f2f2f2"/><path d="M5 15l25 24h-9L5 25z" fill="#fbd24a"/><path d="M5 30q10-1 14 9H5z" fill="#f4a6b4"/><path d="M20 18l19 19v-7L22 12z" fill="#c9e6b0"/></g><path d="M13.500 5v17" stroke="#fff" stroke-width="7"/><path d="M13.500 5v18" stroke="#2a7ee8" stroke-width="4"/><circle cx="13.500" cy="25.500" r="5.500" fill="#fff"/><circle cx="13.500" cy="25.500" r="3.600" fill="#1c6fe8"/><path d="M24 28q7-2 13 0 1 7-6.500 10Q23 35 24 28z" fill="#2f6fca"/><path d="M24 28q7-2 13 0v2H24z" fill="#d9412f"/><text x="30.500" y="35" font-size="5" font-weight="700" text-anchor="middle" fill="#fff" font-family="Inter, sans-serif">280</text>`,
  svg`${tile("#fafafa")}${petals.map((c, i) => svg`<rect x="17.800" y="7" width="8.400" height="14" rx="4.200" fill=${c} opacity=".85" transform="rotate(${i * 45} 22 22)"/>`)}`,
  svg`<defs>${grad("ft", "#1ff45c", "#04c72f")}</defs>${tile("url(#ft)")}<rect x="10" y="14.500" width="16.500" height="15" rx="4" fill="#e9fbea"/><path d="M27.500 20.500l6.500-5v13l-6.500-5z" fill="#e9fbea"/>`,
  svg`${tile("#f8f8f6")}<path d="M13 5h18q8 0 8 8v3H5v-3q0-8 8-8z" fill="#f8353c"/><text x="22" y="13.200" font-size="6.500" font-weight="700" text-anchor="middle" fill="#fff" font-family="Inter, sans-serif">OCT</text><text x="22" y="33.500" font-size="20" font-weight="300" text-anchor="middle" fill="#222" letter-spacing="-.5" font-family="Inter, sans-serif">12</text>`,
  svg`<path d="M36 10h4.500v5H36z" fill="#ddd"/><path d="M36 16h4.500v6H36z" fill="#28a8f0"/><path d="M36 22h4.500v6H36z" fill="#f09a20"/><path d="M36 28h4.500v7H36z" fill="#30c860"/><rect x="5" y="5" width="33.500" height="34" rx="8" fill="#b0874c"/><circle cx="22" cy="22" r="10.800" fill="none" stroke="#8b6836" stroke-width="1.200"/><circle cx="22" cy="19" r="4" fill="#8f6c3a"/><path d="M14 29q2-5 8-5t8 5q-8 6-16 0z" fill="#8f6c3a"/>`,
  svg`${tile("#fbfbfb")}${["#1e7bf5", "#f0403a", "#f29a2e"].map((c, i) => svg`<circle cx="11.500" cy=${13.500 + i * 8.500} r="3" fill="none" stroke=${c} opacity=".4"/><circle cx="11.500" cy=${13.500 + i * 8.500} r="2.100" fill=${c}/><path d="M17 ${13.500 + i * 8.500}h18" stroke="#c9c9cc"/>`)}`,
  svg`${tile("#efece8")}<path d="M13 5h18q8 0 8 8H5q0-8 8-8z" fill="#ffcc0a"/><path d="M5 14h34" stroke="#a58b52" stroke-width="1.200" stroke-dasharray="1 .7"/><path d="M5 22.500h34M5 30.500h34" stroke="#dcd8d3"/>`,
  svg`<defs>${grad("tv", "#22332f", "#0c1413")}</defs>${tile("url(#tv)")}<g transform="translate(8.500 14.500) scale(.5)"><path d=${APPLE} fill="#fff"/></g><text x="20.500" y="26.500" font-size="15" fill="#fff" font-family="Inter, sans-serif" letter-spacing="-.3">tv</text>`,
  svg`<defs>${grad("mu", "#fb4166", "#fa0b31")}</defs>${tile("url(#mu)")}<path d="M17.500 30.500V14.500L29.500 12v15.500" fill="none" stroke="#fff" stroke-width="2"/><path d="M16.700 14l13.600-2.800v3.800L16.700 17.800z" fill="#fff"/><ellipse cx="14.800" cy="30.300" rx="3.500" ry="2.800" fill="#fff"/><ellipse cx="26.800" cy="27.500" rx="3.500" ry="2.800" fill="#fff"/>`,
  svg`<defs>${grad("pc", "#d42ef0", "#8d0bd0")}</defs>${tile("url(#pc)")}<g fill="none" stroke="#f3dcfb" stroke-width="1.700"><path d="M16 30.500a11 11 0 1 1 12 0"/><path d="M17.500 26.500a6.800 6.800 0 1 1 9 0"/></g><circle cx="22" cy="20.500" r="3" fill="#fff"/><path d="M19 27q0-2.500 3-2.500t3 2.500l-1 7q-2 2-4 0z" fill="#fff"/>`,
  svg`${tile("#fff")}<g transform="translate(10 10.200)"><path d=${VSCODE} fill="#1277c4"/><path d="M18.200.21l4.950 2.377A1.500 1.500 0 0 1 24 3.939V20.060l-.85 1.353-4.940 2.377L18 22z" fill="#2ea0ee"/></g>`,
  svg`<g transform="translate(-1 1)"><path d="M11 17h20v14q0 2-2 2H13q-2 0-2-2z" fill="#8cc016"/><path d="M11 16q1-8.500 10-8.500T31 16z" fill="#8cc016"/><path d="M14 5.500l3 4M28 5.500l-3 4" stroke="#8cc016"/><circle cx="17" cy="12.500" r="1" fill="#fff"/><circle cx="25" cy="12.500" r="1" fill="#fff"/><path d="M8.200 19v9M17 32v6M25 32v6M32 20.500q3.500-.5 5.500-3.500v-4" fill="none" stroke="#8cc016" stroke-width="3.400" stroke-linecap="round"/><path d="M33.500 3h9v12h-9zM35.500-.5h5V4h-5z" fill="#9bd22a"/><path d="M38 4.500V13M36 7.500v2l2 1.500L40 9.500V7" fill="none" stroke="#eef8d8"/></g>`,
  svg`<path d="M12.500 6H40v8H12.500z" fill="#2aa4f4"/><path d="M12.500 14H40v7.500H12.500z" fill="#1f7fe0"/><path d="M12.500 21.500H40v8H12.500z" fill="#1a5abf"/><path d="M12.500 29.500H40V37.500H12.500z" fill="#17409a"/><rect x="4" y="13" width="18.500" height="18.500" rx="1.500" fill="#1c56bd"/><text x="13.200" y="26.500" font-size="12" font-weight="700" text-anchor="middle" fill="#fff" font-family="Inter, sans-serif">W</text>`,
  svg`<circle cx="22" cy="22" r="19" fill="#fff"/><g transform="translate(4.300 4.300) scale(1.475)"><path d=${PINTEREST} fill="#cb0a17"/></g>`,
  svg`<circle cx="22" cy="22" r="19" fill="#000"/><g transform="translate(8.600 7.700) scale(1.120)"><path d=${TIKTOK} fill="#25f4ee" transform="translate(-.8 -.5)"/><path d=${TIKTOK} fill="#fe2c55" transform="translate(.8 .5)"/><path d=${TIKTOK} fill="#fff"/></g>`,
  svg`${tile("#fff")}<rect x="9" y="13" width="26" height="18.500" rx="4.500" fill="#fe0000"/><path d="M19.500 18.500v7.500l6.500-3.750z" fill="#fff"/>`,
  svg`${tile("#9cc3d8")}<g clip-path="url(#tc)"><g transform="translate(2.500 4) scale(1.130)">${girl}</g></g>`,
];

const dockTools: unknown[] = [
  svg`<rect x="5.700" y="5.700" width="32.600" height="32.600" rx="7.500" fill="#1c1c1e" stroke="#b8babc" stroke-width="1.600"/><text x="9.500" y="17" font-size="9" fill="#fff" font-weight="600" font-family="Liberation Mono, monospace">&gt;_</text>`,
  svg`${tile("#f4f5f8")}<path d="M8 12q0-4 4-4h20q4 0 4 4v12H8z" fill="#8fb4f0"/><path d="M8 23h28v5H8z" fill="#2c5aa0"/><path d="M8 28h28v4q0 4-4 4H12q-4 0-4-4z" fill="#cdbfae"/><path d="M23.500 22.500h12.500l1 5H22.500z" fill="#1c1e22"/><path d="M23 27.500h14l2.500 9q0 3-3 3H23.500q-3 0-2.500-3z" fill="#c3c8cd"/><path d="M24.500 31h12v5h-12z" fill="#f1f1f1"/><path d="M26 33.500h9" stroke="#555" stroke-width="1.500" stroke-dasharray="3 1.500"/>`,
  svg`<path d="M9 29h26l4 12.500H5z" fill="#f28313"/><path d="M20.300 3.500h3.400L32.500 31q-10.500 5-21 0z" fill="#f58a16"/><path d="M18.500 10h7l2.200 7q-5.700 2.500-11.400 0zM14.300 23q7.700 3.500 15.400 0l2 6.500q-9.700 4.500-19.400 0z" fill="#eceff2"/>`,
  svg`<rect x="1.500" y="1" width="41" height="42" fill="#231f21"/><g transform="translate(3.800 4) scale(1.520)"><path d=${GITHUB} fill="#fff"/></g>`,
];

@customElement("app-dock")
class AppDock extends LitElement {
  static styles = css`
    :host { display: flex; box-sizing: border-box; width: 1370px; height: 54px; border: 1px solid #3c3b43; border-radius: 17px; background: #17161e; padding-left: 2px; }
    .slot { display: flex; flex-direction: column; align-items: center; width: 44.140px; flex: none; padding-top: 2px; box-sizing: border-box; }
    .slot svg { display: block; overflow: visible; }
    .dot { width: 4px; height: 4px; border-radius: 50%; background: #9b9ba0; }
    .sep { width: 1px; height: 39px; margin: 7px 9.500px 0 10px; background: #4f4e56; flex: none; }
    .bar { width: 40px; height: 2px; border: 1px solid #9b9ba0; box-sizing: content-box; border-radius: 2px; flex: none; }
  `;

  private slotOf(art: unknown, mark: unknown = "") {
    return html`<div class="slot">${icon(44, 44, "0 0 44 44", art)}${mark}</div>`;
  }

  render() {
    const dot = html`<i class="dot"></i>`;
    return html`
      ${dockApps.map((a, i) => this.slotOf(a, i === 0 || i === 3 ? dot : ""))}
      <div class="sep"></div>
      ${dockTools.map((a, i) => this.slotOf(a, i === 3 ? dot : ""))}
      <div class="sep"></div>
      ${this.slotOf(svg`<path d="M28 7h8v21h-8zM8 7h4v21H8z" fill="#22b4f2"/><path d="M8.500 5H25l10 11.500V41H8.500z" fill="#f3f3f3"/><path d="M25 5l10 11.500q-5-2.500-9.500-1z" fill="#bfc1c4"/>`, html`<i class="bar"></i>`)}
      ${this.slotOf(svg`<rect x="2.500" y="8" width="40" height="27" fill="#fafbfd"/><path d="M2.500 8h40v3.500h-40z" fill="#242628"/><path d="M17 15h11" stroke="#3b5a8c"/><path d="M5 19h4M17 19h4M29 19h4M5 28h4" stroke="#a9b5cc"/><path d="M13 18h1.500v1.500H13zM25.500 18H27v1.500h-1.500zM38 18h1.500v1.500H38zM13 27.500h1.500V29H13z" fill="#1c3f80"/><rect x="27" y="27" width="16" height="15" fill="#1b191b"/><g transform="translate(28.500 27.700) scale(.560)"><path d=${GITHUB} fill="#fff"/></g>`)}
      ${this.slotOf(svg`<defs><linearGradient id="bin"><stop stop-color="#8b9193"/><stop offset=".5" stop-color="#62686b"/><stop offset="1" stop-color="#93999b"/></linearGradient></defs><path d="M8.500 7h27l-3.500 32q-10 4-20 0z" fill="url(#bin)"/><path d="M7.500 7l4-4 3 1 3-2 5 2 4-2 4 2 3-1 3.500 4q-14 4-29.500 0z" fill="#e6e6e8"/><path d="M12 6l3-2m3 4l2-4m5 3l3-2m3 3l2-3" stroke="#555" stroke-width="1.500"/><path d="M19 5l2 2M33 4l-2 1" stroke="#e06a30" stroke-width="1.500"/><path d="M14 12l2 25M22 12v26M30 12l-2 25" stroke="#7d8386" stroke-width=".7"/>`)}
    `;
  }
}

@customElement("app-root")
class AppRoot extends LitElement {
  static styles = css`
    :host { display: flex; flex-direction: column; width: 1440px; height: 900px; overflow: hidden; background: #020208; }
    .window { display: flex; flex-direction: column; box-sizing: border-box; height: 813px; overflow: hidden; border-radius: 11px; flex: none; border-top: 1px solid #6b6b6b; position: relative; }
    .window::after { content: ""; position: absolute; inset: 0; border-radius: 11px; border: 1px solid rgba(150, 160, 185, .35); border-top: 0; pointer-events: none;
      mask-image: linear-gradient(#000 85px, transparent 86px, transparent 682px, #000 683px); }
    .dock { display: flex; padding: 4px 0 0 35px; }
  `;

  render() {
    return html`
      <menu-bar></menu-bar>
      <div class="window"><browser-chrome></browser-chrome><school-page></school-page></div>
      <div class="dock"><app-dock></app-dock></div>`;
  }
}
